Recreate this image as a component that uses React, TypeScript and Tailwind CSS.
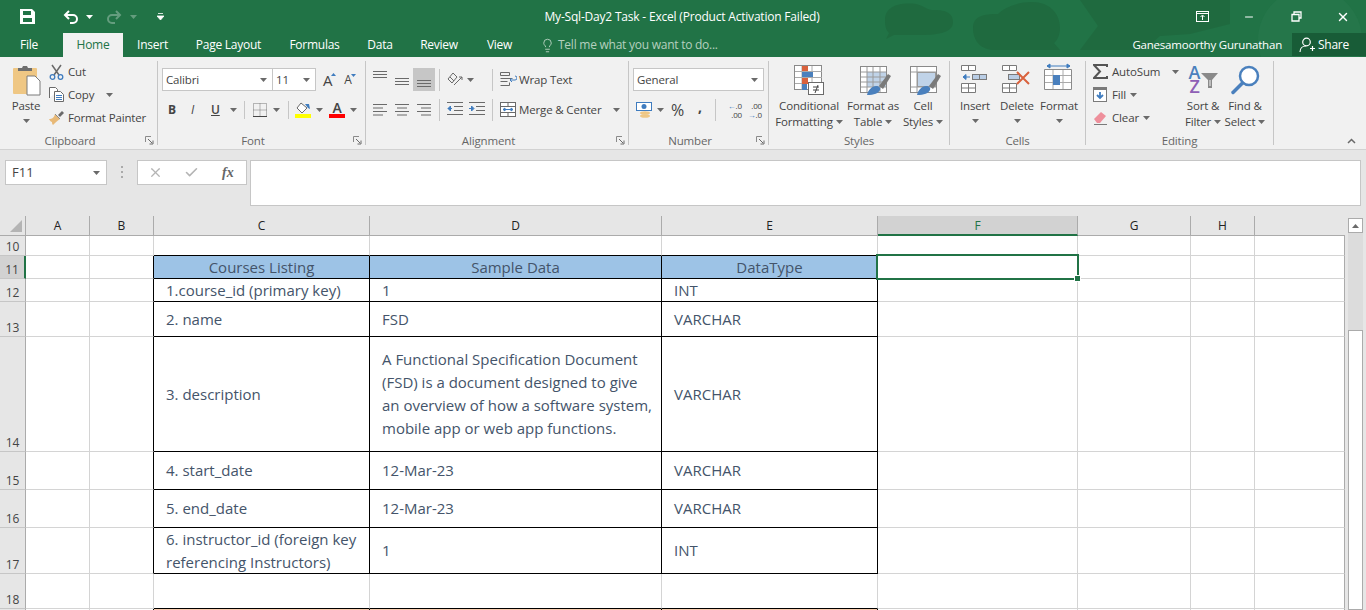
import type { ReactNode } from 'react'
import { Check, Lightbulb, Minus, X } from 'lucide-react'

const font = "[font-family:'Open_Sans','Liberation_Sans',sans-serif]"

function Caret({ className = '' }: { className?: string }) {
  return (
    <svg width="7" height="4" viewBox="0 0 7 4" className={`shrink-0 ${className}`}>
      <path d="M0 0h7L3.5 4z" fill="#6a6a6a" />
    </svg>
  )
}

function Launcher() {
  return (
    <svg width="9" height="9" viewBox="0 0 9 9">
      <path d="M.5 6V.5H6" fill="none" stroke="#8a8a8a" />
      <path d="M3 3l4 4M8 4.500V8H4.500" fill="none" stroke="#6a6a6a" />
    </svg>
  )
}

function Group({ label, width, children, launcher }: { label: string; width: number; children: ReactNode; launcher?: boolean }) {
  return (
    <div className="mt-[4px] flex h-[84px] flex-col border-r border-[#c6c6c6]" style={{ width }}>
      <div className="min-h-0 flex-1">{children}</div>
      <div className={`relative flex h-[8px] items-center justify-center whitespace-nowrap text-[11.5px] text-[#666] ${launcher ? 'pr-[17px]' : ''}`}>
        {label}
        {launcher && (
          <span className="absolute right-[3px] -top-[1px]">
            <Launcher />
          </span>
        )}
      </div>
    </div>
  )
}

function AlignLines({ lines }: { lines: [number, number][] }) {
  return (
    <svg width="16" height="12" viewBox="0 0 16 12" className="block">
      {lines.map(([x, w], i) => (
        <path key={i} d={`M${x} ${0.5 + i * 3.5}h${w}`} stroke="#6a6a6a" />
      ))}
    </svg>
  )
}

function VAlign() {
  return (
    <svg width="14" height="7" viewBox="0 0 14 7" className="block">
      <path d="M0 .5h14M0 3.500h14M0 6.500h14" stroke="#6a6a6a" />
    </svg>
  )
}

function TableSwatch({ kind }: { kind: 'format' | 'cell' }) {
  return (
    <svg width="36" height="32" viewBox="0 0 36 32">
      <rect x="3.500" y="2.500" width="26" height="26" fill="#fff" stroke="#8a8a8a" />
      {kind === 'format' ? (
        <>
          <rect x="10" y="8" width="19" height="15" fill="#c0d3e8" />
          <path d="M4 8h25M4 13h25M4 18h25M4 23h25M10 3v25M16 3v25M23 3v25" stroke="#9a9a9a" fill="none" />
        </>
      ) : (
        <>
          <path d="M4 8h25M4 23h25M10 3v25" stroke="#9a9a9a" fill="none" />
          <rect x="10.500" y="8.500" width="18" height="14" fill="#c0d3e8" stroke="#9a9a9a" />
        </>
      )}
      <path d="M22 22l9-12 3 2-8 13z" fill="#7a7a7a" />
      <path d="M10 31c1-5 5-9 9-9 3 0 5 2 4 4-1 3-6 5-13 5z" fill="#4a80bd" />
    </svg>
  )
}

const columns = ['A', 'B', 'C', 'D', 'E', 'F', 'G', 'H', '']

const rows: { n: number; cells?: string[] }[] = [
  { n: 10 },
  { n: 11, cells: ['Courses Listing', 'Sample Data', 'DataType'] },
  { n: 12, cells: ['1.course_id (primary key)', '1', 'INT'] },
  { n: 13, cells: ['2. name', 'FSD', 'VARCHAR'] },
  {
    n: 14,
    cells: [
      '3. description',
      'A Functional Specification Document (FSD) is a document designed to give an overview of how a software system, mobile app or web app functions.',
      'VARCHAR',
    ],
  },
  { n: 15, cells: ['4. start_date', '12-Mar-23', 'VARCHAR'] },
  { n: 16, cells: ['5. end_date', '12-Mar-23', 'VARCHAR'] },
  { n: 17, cells: ['6. instructor_id (foreign key referencing Instructors)', '1', 'INT'] },
  { n: 18 },
  { n: 19 },
]

function Sheet() {
  return (
    <div className="flex h-[394px] overflow-hidden bg-[#e6e6e6]">
      <div className="grid h-full w-[1345px] grid-cols-[26px_64px_64px_216px_292px_216px_200px_113px_64px_90px] grid-rows-[20px_20px_23px_23px_35px_115px_38px_38px_46px_35px_1px]">
        {/* corner + column letters */}
        <div className="flex items-end justify-end border-r border-b border-[#ababab] pr-[3px] pb-[3px]">
          <svg width="12" height="12" viewBox="0 0 12 12">
            <path d="M12 0v12H0z" fill="#b4b4b4" />
          </svg>
        </div>
        {columns.map((c, i) => (
          <div
            key={i}
            className={`flex items-center justify-center pt-[1px] text-[12px] leading-[16px] ${
              c === 'F'
                ? 'border-r border-b-2 border-r-[#ababab] border-b-[#217346] bg-[#d2d2d2] text-[#217346]'
                : c === ''
                  ? 'border-b border-[#ababab]'
                  : 'border-r border-b border-[#ababab] text-[#222]'
            }`}
          >
            {c}
          </div>
        ))}

        {rows.map((row) => {
          const inTable = row.n >= 11 && row.n <= 17
          return (
            <div key={row.n} className="contents">
              <div
                className={`flex items-end justify-center overflow-hidden text-[12px] leading-[16px] text-[#444] ${
                  row.n === 19 ? '' : 'border-b border-[#c6c6c6]'
                } ${row.n === 11 ? 'border-r-2 border-r-[#217346] bg-[#d2d2d2]' : 'border-r border-r-[#ababab]'}`}
              >
                {row.n === 19 ? '' : row.n}
              </div>
              {[0, 1, 2, 3, 4, 5, 6, 7, 8].map((col) => {
                const tableCol = col >= 2 && col <= 4
                const blackRight = col >= 1 && col <= 4 && (inTable || row.n === 19)
                const text = tableCol ? row.cells?.[col - 2] : undefined
                return (
                  <div
                    key={col}
                    className={`relative flex items-center border-r text-[15px] leading-[23px] text-[#44546a] ${
                      row.n === 19 ? '' : 'border-b'
                    } ${tableCol ? 'border-b-black' : 'border-b-[#d4d4d4]'} ${
                      col === 8 ? 'border-r-[#ababab]' : blackRight ? 'border-r-black' : 'border-r-[#d4d4d4]'
                    } ${
                      row.n === 11 && tableCol
                        ? 'justify-center bg-[#9dc3e6]'
                        : row.n === 19 && tableCol
                          ? 'bg-[#f8cbad]'
                          : 'bg-white pl-[12px] pr-[8px]'
                    }`}
                  >
                    {text}
                    {row.n === 11 && col === 5 && (
                      <div className="absolute -left-[2px] -top-[2px] z-10 h-[26px] w-[203px] border-2 border-[#217346]">
                        <div className="absolute -bottom-[4px] -right-[4px] h-[7px] w-[7px] border border-white bg-[#217346]" />
                      </div>
                    )}
                  </div>
                )
              })}
            </div>
          )
        })}
      </div>

      {/* vertical scrollbar */}
      <div className="h-full w-[21px] px-[3px] pt-[2px]">
        <div className="flex h-full flex-col bg-[#dcdcdc]">
          <div className="flex h-[15px] items-center justify-center border border-[#ababab] bg-white">
            <svg width="7" height="4" viewBox="0 0 7 4">
              <path d="M3.500 0L7 4H0z" fill="#6a6a6a" />
            </svg>
          </div>
          <div className="mt-[97px] flex-1 border border-[#ababab] bg-white" />
        </div>
      </div>
    </div>
  )
}

export default function App() {
  const tabs = [
    ['Insert', 'w-[59px]'],
    ['Page Layout', 'w-[93px]'],
    ['Formulas', 'w-[79px]'],
    ['Data', 'w-[52px]'],
    ['Review', 'w-[66px]'],
    ['View', 'w-[55px]'],
  ]

  return (
    <div className={`h-[610px] w-[1366px] overflow-hidden bg-[#e6e6e6] ${font}`}>
      {/* Title bar + tabs */}
      <div className="relative h-[57px] overflow-hidden bg-[#217346] text-white">
        {/* office theme blotches */}
        <svg className="absolute left-[880px] top-0" width="486" height="57" viewBox="0 0 486 57">
          <circle cx="430" cy="40" r="52" fill="#25764a" />
          <path d="M5 20C5 6 20 2 36 4c8 2 12 6 16 6 8 0 21 0 21 12 0 10-13 13-33 13H14l-8 4 3-6c-3-3-4-7-4-13z" fill="#1f6a3f" />
          <path d="M93 28c0-12 11-14 25-14 6-6 18-12 34-12 18 0 28 12 28 26 0 8-4 14-6 15l6 7h-65c-15 0-22-10-22-22z" fill="#1f6a3f" />
          <path d="M200 0h150v24l-40 10-30 2-16 14H200l18-24z" fill="#1f6a3f" />
        </svg>
        <div className="relative flex h-[33px] items-center">
          <div className="flex items-center">
            <svg className="ml-[20px]" width="15" height="15" viewBox="0 0 15 15">
              <path d="M0 0h12l3 3v12H0z" fill="#fff" />
              <path d="M3 2h8v4H3z" fill="#217346" />
              <path d="M3 9h9v4H3z" fill="#217346" />
            </svg>
            <svg className="ml-[28px]" width="15" height="14" viewBox="0 0 15 14">
              <path d="M6 1L2 5l4 4M2 5h8a3.500 3.500 0 0 1 0 8H7" fill="none" stroke="#fff" strokeWidth="2" />
            </svg>
            <Caret className="ml-[8px] [&_path]:fill-white" />
            <svg className="ml-[14px] opacity-30" width="15" height="14" viewBox="0 0 15 14">
              <path d="M9 1l4 4-4 4M13 5H5a3.500 3.500 0 0 0 0 8h3" fill="none" stroke="#fff" strokeWidth="2" />
            </svg>
            <Caret className="ml-[8px] opacity-30 [&_path]:fill-white" />
            <svg className="ml-[20px]" width="7" height="7" viewBox="0 0 7 7">
              <path d="M1 .5h5M0 3h7L3.500 7z" stroke="#fff" strokeWidth=".8" fill="#fff" />
            </svg>
          </div>
          <div className="absolute left-0 right-0 top-[8px] flex justify-center pr-[2px] text-[12px] leading-[17px] tracking-[-0.2px]">
            My-Sql-Day2 Task - Excel (Product Activation Failed)
          </div>
          <div className="ml-auto flex items-center">
            <svg width="13" height="11" viewBox="0 0 13 11">
              <rect x=".5" y=".5" width="12" height="10" fill="none" stroke="#fff" />
              <path d="M.5 2.500h12M6.500 9V4.500M4.500 6l2-2 2 2" fill="none" stroke="#fff" />
            </svg>
            <Minus className="ml-[34px]" size={12} strokeWidth={2} />
            <svg className="ml-[36px]" width="11" height="11" viewBox="0 0 11 11">
              <path d="M3 3V1h7v6H8M1 3.500h7V10H1z" fill="none" stroke="#fff" strokeWidth="1.300" />
            </svg>
            <X className="ml-[34px] mr-[16px]" size={14} strokeWidth={2.500} />
          </div>
        </div>
        <div className="relative flex h-[24px] items-center text-[12px] tracking-[-0.25px]">
          <div className="flex h-full w-[58px] items-center justify-center">File</div>
          <div className="ml-[5px] flex h-full w-[60px] items-center justify-center bg-[#f1f1f1] text-[#217346]">Home</div>
          {tabs.map(([t, w]) => (
            <div key={t} className={`flex h-full items-center justify-center ${w}`}>
              {t}
            </div>
          ))}
          <Lightbulb className="ml-[13px] text-[#b5d0bf]" size={15} strokeWidth={1.500} />
          <div className="ml-[3px] text-[#b5d0bf]">Tell me what you want to do...</div>
          <div className="ml-auto text-[11.5px] tracking-[-0.2px]">Ganesamoorthy Gurunathan</div>
          <div className="ml-[10px] flex h-[23px] w-[74px] items-center gap-[3px] self-start bg-[#185c37] pl-[7px]">
            <svg width="16" height="16" viewBox="0 0 16 16">
              <circle cx="7.500" cy="5" r="3.800" fill="none" stroke="#fff" strokeWidth="1.200" />
              <path d="M1 15c0-3.500 2.500-6 6-6M11 11.500h5M13.500 9v5" fill="none" stroke="#fff" strokeWidth="1.200" />
            </svg>
            Share
          </div>
        </div>
      </div>

      {/* Ribbon */}
      <div className="relative flex h-[93px] items-start border-b border-[#d2d2d2] bg-[#f1f1f1] text-[11.5px] leading-[16px] tracking-[-0.15px] text-[#444]">
        <Group label="Clipboard" width={158} launcher>
          <div className="flex">
            <div className="ml-[11px] flex w-[30px] flex-col items-center">
              <svg className="mt-[4px]" width="30" height="31" viewBox="0 0 30 31">
                <rect x="2" y="3" width="24" height="26" rx="1" fill="#efc784" />
                <path d="M7 6V3h4l1-2h4l1 2h4v3z" fill="#6e6e6e" />
                <path d="M16 11h8l5 5v14H16z" fill="#fff" stroke="#7a7a7a" />
              </svg>
              <div className="mt-[2px]">Paste</div>
              <Caret className="mt-[5px]" />
            </div>
            <div className="ml-[8px] -mt-[1px] flex flex-col">
              <div className="flex h-[23px] items-center gap-[4px]">
                <svg width="15" height="16" viewBox="0 0 15 16">
                  <path d="M3 1l7 10M12 1L5 11" stroke="#6a6a6a" strokeWidth="1.500" />
                  <circle cx="3.500" cy="13" r="2.300" fill="none" stroke="#3f7cbf" strokeWidth="1.300" />
                  <circle cx="11.500" cy="13" r="2.300" fill="none" stroke="#3f7cbf" strokeWidth="1.300" />
                </svg>
                Cut
              </div>
              <div className="flex h-[23px] items-center gap-[4px]">
                <svg width="15" height="15" viewBox="0 0 15 15">
                  <path d="M.5 11V.5h6l2 2V4" fill="#fff" stroke="#6a6a6a" />
                  <path d="M5.500 4.500h6l3 3v7h-9z" fill="#fff" stroke="#6a6a6a" />
                  <path d="M7 8.500h6M7 10.500h6M7 12.500h6" stroke="#3f7cbf" />
                </svg>
                Copy
                <Caret className="ml-[8px]" />
              </div>
              <div className="flex h-[23px] items-center gap-[3px]">
                <svg width="16" height="15" viewBox="0 0 16 15">
                  <path d="M9 5l4-4 2 2-4 4z" fill="#6a6a6a" />
                  <path d="M0 9c3 0 5-1 6-5l5 5c-3 2-5 4-7 6-1-1-1-2-1-3-1 0-2-1-3-3z" fill="#e8b977" />
                  <path d="M6 4l5 5" stroke="#8a8a8a" />
                </svg>
                Format Painter
              </div>
            </div>
          </div>
        </Group>

        <Group label="Font" width={208} launcher>
          <div className="mt-[7px] flex h-[23px] items-center pl-[4px]">
            <div className="flex h-[23px] w-[111px] items-center justify-between border border-[#c6c6c6] bg-white pl-[3px] pr-[5px]">
              Calibri
              <Caret />
            </div>
            <div className="flex h-[23px] w-[43px] items-center justify-between border border-l-0 border-[#c6c6c6] bg-white pl-[3px] pr-[5px]">
              11
              <Caret />
            </div>
            <div className="relative ml-[7px] text-[15px]">
              A
              <svg className="absolute -right-[4px] top-[1px]" width="5" height="3" viewBox="0 0 5 3">
                <path d="M2.500 0L5 3H0z" fill="#3f7cbf" />
              </svg>
            </div>
            <div className="relative ml-[12px] text-[12px]">
              A
              <svg className="absolute -right-[4px] top-[2px]" width="5" height="3" viewBox="0 0 5 3">
                <path d="M0 0h5L2.500 3z" fill="#3f7cbf" />
              </svg>
            </div>
          </div>
          <div className="mt-[7px] flex h-[23px] items-center pl-[10px] text-[12px]">
            <span className="w-[23px] font-bold">B</span>
            <span className="w-[20px] italic">I</span>
            <span className="w-[15px] font-semibold underline">U</span>
            <Caret className="ml-[4px]" />
            <span className="ml-[7px] h-[18px] w-px bg-[#c6c6c6]" />
            <svg className="ml-[8px]" width="14" height="14" viewBox="0 0 14 14">
              <path d="M.5.500h13v13H.5zM7 .5v13M.5 7h13" fill="none" stroke="#777" strokeDasharray="1 1" />
              <path d="M0 13.500h14" stroke="#444" />
            </svg>
            <Caret className="ml-[6px]" />
            <span className="ml-[8px] h-[18px] w-px bg-[#c6c6c6]" />
            <div className="ml-[6px] flex w-[16px] flex-col items-center">
              <svg width="16" height="12" viewBox="0 0 16 12">
                <path d="M6 1l6 5-5 5-5-5z" fill="#fff" stroke="#6a6a6a" />
                <path d="M10 2h4l1 5-2-1z" fill="#3f7cbf" />
              </svg>
              <span className="h-[4px] w-[16px] bg-[#ffff00]" />
            </div>
            <Caret className="ml-[5px]" />
            <div className="ml-[6px] flex w-[16px] flex-col items-center leading-[12px]">
              <span className="h-[12px] text-[14px] font-semibold leading-[12px]">A</span>
              <span className="h-[4px] w-[16px] bg-[#ff0000]" />
            </div>
            <Caret className="ml-[5px]" />
          </div>
        </Group>

        <Group label="Alignment" width={263} launcher>
          <div className="mt-[7px] flex h-[23px] items-center whitespace-nowrap pl-[7px]">
            <div className="flex h-[23px] w-[22px] items-start pt-[3px]"><VAlign /></div>
            <div className="flex h-[23px] w-[18px] items-center pt-[3px]"><VAlign /></div>
            <div className="flex h-[23px] w-[22px] items-end justify-center bg-[#c6c6c6] pb-[4px]"><VAlign /></div>
            <span className="ml-[4px] h-[22px] w-px bg-[#c6c6c6]" />
            <svg className="ml-[7px]" width="16" height="15" viewBox="0 0 16 15">
              <path d="M1 7l5-6 4 4-5 6zM3 5l4 4M7 13l8-8M12 5h3v3" fill="none" stroke="#6a6a6a" />
            </svg>
            <Caret className="ml-[4px]" />
            <span className="ml-[18px] h-[22px] w-px bg-[#c6c6c6]" />
            <svg className="ml-[7px]" width="17" height="15" viewBox="0 0 17 15">
              <path d="M.5.500h9v3h-9zM.5 6.500h12M.5 9.500h7M.5 13.500h9v-3" fill="none" stroke="#6a6a6a" />
              <path d="M10 8h5a1.500 1.500 0 0 0 0-4M10 8l2-2M10 8l2 2" fill="none" stroke="#3f7cbf" />
            </svg>
            <span className="ml-[2px]">Wrap Text</span>
          </div>
          <div className="mt-[7px] flex h-[23px] items-center whitespace-nowrap pl-[7px]">
            <div className="w-[22px]"><AlignLines lines={[[0, 14], [0, 10], [0, 14], [0, 10]]} /></div>
            <div className="w-[22px]"><AlignLines lines={[[0, 14], [2, 10], [0, 14], [2, 10]]} /></div>
            <div className="w-[22px]"><AlignLines lines={[[0, 14], [4, 10], [0, 14], [4, 10]]} /></div>
            <span className="h-[22px] w-px bg-[#c6c6c6]" />
            <svg className="ml-[7px]" width="16" height="15" viewBox="0 0 16 15">
              <path d="M0 .5h16M7 4.500h9M7 8.500h9M0 12.500h16" stroke="#6a6a6a" />
              <path d="M5 6.500H1M1 6.500l2.500-2.500v5z" stroke="#3f7cbf" fill="#3f7cbf" />
            </svg>
            <svg className="ml-[6px]" width="16" height="15" viewBox="0 0 16 15">
              <path d="M0 .5h16M7 4.500h9M7 8.500h9M0 12.500h16" stroke="#6a6a6a" />
              <path d="M0 6.500h4M5 6.500L2.500 4v5z" stroke="#3f7cbf" fill="#3f7cbf" />
            </svg>
            <span className="ml-[7px] h-[22px] w-px bg-[#c6c6c6]" />
            <svg className="ml-[7px]" width="16" height="15" viewBox="0 0 16 15">
              <rect x=".5" y=".5" width="15" height="14" fill="#fff" stroke="#6a6a6a" />
              <path d="M.5 4.500h15M.5 10.500h15M8 .5v4M8 10.500v4" stroke="#6a6a6a" />
              <path d="M3 7.500h10M3 7.500l2-1.500v3zM13 7.500l-2-1.500v3z" stroke="#3f7cbf" fill="#3f7cbf" />
            </svg>
            <span className="ml-[3px]">Merge &amp; Center</span>
            <Caret className="ml-[12px]" />
          </div>
        </Group>

        <Group label="Number" width={140} launcher>
          <div className="ml-[4px] mt-[7px] flex h-[23px] w-[131px] items-center justify-between border border-[#c6c6c6] bg-white pl-[3px] pr-[5px]">
            General
            <Caret />
          </div>
          <div className="mt-[7px] flex h-[23px] items-center pl-[7px]">
            <svg width="16" height="16" viewBox="0 0 16 16">
              <rect x=".5" y=".5" width="15" height="8" fill="#fff" stroke="#3f7cbf" />
              <circle cx="8" cy="4.500" r="2.500" fill="#3f7cbf" />
              <ellipse cx="9" cy="11" rx="5" ry="1.800" fill="#efc784" />
              <ellipse cx="9" cy="14" rx="5" ry="1.800" fill="#efc784" />
            </svg>
            <Caret className="ml-[5px]" />
            <span className="ml-[7px] w-[14px] text-[16px]">%</span>
            <span className="ml-[13px] mb-[6px] w-[5px] text-[14px] font-bold">,</span>
            <span className="ml-[12px] h-[22px] w-px bg-[#c6c6c6]" />
            <div className="ml-[6px] flex w-[20px] flex-col items-end text-[8px] leading-[9px]">
              <span><span className="text-[#3f7cbf]">←</span>.0</span>
              <span>.00</span>
            </div>
            <div className="ml-[3px] flex w-[17px] flex-col items-end text-[8px] leading-[9px]">
              <span>.00</span>
              <span><span className="text-[#3f7cbf]">→</span>.0</span>
            </div>
          </div>
        </Group>

        <Group label="Styles" width={181}>
          <div className="flex whitespace-nowrap text-center">
            <div className="flex w-[80px] flex-col items-center">
              <div className="h-[37px] pt-[4px]">
                <svg width="31" height="31" viewBox="0 0 31 31">
                  <rect x=".5" y=".5" width="27" height="24" fill="#fff" stroke="#8a8a8a" />
                  <path d="M8 1v24M18 1v24M1 6.500h27M1 12.500h27M1 18.500h27" stroke="#aaa" />
                  <path d="M8 1h6v5H8zM8 13h6v6H8z" fill="#d9623d" />
                  <path d="M8 7h11v5H8zM8 19h5v6H8z" fill="#4a80bd" />
                  <rect x="14.500" y="17.500" width="15" height="12" fill="#fff" stroke="#6a6a6a" />
                  <path d="M19 22h6M19 25h6M24 20l-3 8" stroke="#444" />
                </svg>
              </div>
              <div>
                Conditional
                <div className="flex items-center justify-center gap-[3px]">Formatting <Caret /></div>
              </div>
            </div>
            <div className="flex w-[48px] flex-col items-center">
              <div className="ml-[4px] h-[37px] pt-[3px]"><TableSwatch kind="format" /></div>
              <div>
                Format as
                <div className="flex items-center justify-center gap-[3px]">Table <Caret /></div>
              </div>
            </div>
            <div className="flex w-[52px] flex-col items-center">
              <div className="ml-[4px] h-[37px] pt-[3px]"><TableSwatch kind="cell" /></div>
              <div>
                Cell
                <div className="flex items-center justify-center gap-[3px]">Styles <Caret /></div>
              </div>
            </div>
          </div>
        </Group>

        <Group label="Cells" width={136}>
          <div className="flex pl-[4px] text-center">
            <div className="flex w-[42px] flex-col items-center">
              <div className="h-[37px] pt-[4px]">
                <svg width="28" height="28" viewBox="0 0 28 28">
                  <path d="M.5.500h14v5H.5zM7.500.5v5M.5 18.500h14v9H.5zM.5 23h14M7.500 18.500v9" fill="#fff" stroke="#7a7a7a" />
                  <rect x="11.500" y="9.500" width="14" height="5" fill="#b9cde5" stroke="#7a7a7a" />
                  <path d="M18.500 9.500v5" stroke="#7a7a7a" />
                  <path d="M9 12H2M2 12l3-2.500v5z" stroke="#3f7cbf" fill="#3f7cbf" />
                </svg>
              </div>
              <div>Insert</div>
              <Caret className="mt-[5px]" />
            </div>
            <div className="flex w-[42px] flex-col items-center">
              <div className="h-[37px] pt-[4px]">
                <svg width="30" height="28" viewBox="0 0 30 28">
                  <path d="M.5.500h14v5H.5zM7.500.5v5M.5 18.500h14v9H.5zM.5 23h14M7.500 18.500v9" fill="#fff" stroke="#7a7a7a" />
                  <rect x="6.500" y="9.500" width="11" height="5" fill="#b9cde5" stroke="#7a7a7a" />
                  <path d="M15 7l12 12M27 7L15 19" stroke="#d9623d" strokeWidth="2" />
                </svg>
              </div>
              <div>Delete</div>
              <Caret className="mt-[5px]" />
            </div>
            <div className="flex w-[42px] flex-col items-center">
              <div className="h-[37px] pt-[2px]">
                <svg width="30" height="30" viewBox="0 0 30 30">
                  <path d="M3 3h23M3 3l3-2v4zM26 3l-3-2v4z" stroke="#3f7cbf" fill="#3f7cbf" />
                  <path d="M.5 6.500h27v20H.5z" fill="#fff" stroke="#8a8a8a" />
                  <path d="M9 7v19M19 7v19M1 12.500h26M1 19.500h26" stroke="#aaa" />
                  <rect x="9" y="12" width="7" height="10" fill="#4a80bd" />
                </svg>
              </div>
              <div>Format</div>
              <Caret className="mt-[5px]" />
            </div>
          </div>
        </Group>

        <Group label="Editing" width={188}>
          <div className="flex pl-[7px]">
            <div className="-mt-[1px] flex w-[89px] flex-col">
              <div className="flex h-[23px] items-center gap-[4px]">
                <svg width="15" height="15" viewBox="0 0 15 15">
                  <path d="M14 3V1H1l6 6.500L1 14h13v-2" fill="none" stroke="#555" strokeWidth="2" />
                </svg>
                AutoSum
                <Caret className="ml-[8px]" />
              </div>
              <div className="flex h-[23px] items-center gap-[4px]">
                <svg width="15" height="15" viewBox="0 0 15 15">
                  <rect x=".5" y=".5" width="13" height="14" fill="#fff" stroke="#7a7a7a" />
                  <path d="M0 0h14v3H0z" fill="#7a7a7a" />
                  <path d="M7 5v6M4 8l3 3 3-3" fill="none" stroke="#3f7cbf" strokeWidth="1.800" />
                </svg>
                Fill <Caret />
              </div>
              <div className="flex h-[23px] items-center gap-[4px]">
                <svg width="15" height="15" viewBox="0 0 15 15">
                  <path d="M1 9l7-7 5 4-6 7H4z" fill="#ee8f9b" />
                  <path d="M1 14.500h13" stroke="#7a7a7a" />
                </svg>
                Clear <Caret />
              </div>
            </div>
            <div className="flex w-[42px] flex-col items-center text-center">
              <div className="flex h-[37px] w-[32px] pl-[1px] pt-[4px]">
                <div className="flex w-[13px] flex-col text-[18px] font-semibold leading-[14px]">
                  <span className="text-[#4a80bd]">A</span>
                  <span className="text-[#8e5fb5]">Z</span>
                </div>
                <svg className="mt-[8px]" width="17" height="15" viewBox="0 0 17 15">
                  <path d="M0 0h17l-6 7v8H7V7z" fill="#8a8a8a" />
                  <path d="M8.500 7h1v6h-1z" fill="#f1f1f1" />
                </svg>
              </div>
              <div>
                Sort &amp;
                <div className="flex items-center justify-center gap-[3px]">Filter <Caret /></div>
              </div>
            </div>
            <div className="flex w-[42px] flex-col items-center text-center">
              <div className="h-[37px] pt-[4px]">
                <svg width="30" height="30" viewBox="0 0 30 30">
                  <circle cx="19" cy="11" r="9" fill="#fff" stroke="#4a80bd" strokeWidth="2.500" />
                  <path d="M12.500 18L3 27.500" stroke="#4a80bd" strokeWidth="3.500" strokeLinecap="round" />
                </svg>
              </div>
              <div>
                Find &amp;
                <div className="flex items-center justify-center gap-[3px]">Select <Caret /></div>
              </div>
            </div>
          </div>
        </Group>

        <svg className="absolute right-[10px] top-[81px]" width="9" height="6" viewBox="0 0 9 6">
          <path d="M1 5l3.500-3.500L8 5" fill="none" stroke="#6a6a6a" strokeWidth="1.500" />
        </svg>
      </div>

      {/* Formula bar */}
      <div className="flex h-[66px] items-start bg-[#e6e6e6] pt-[10px] text-[13px] text-[#444]">
        <div className="ml-[5px] flex h-[25px] w-[102px] items-center justify-between border border-[#c6c6c6] bg-white pl-[6px] pr-[6px]">
          F11
          <Caret />
        </div>
        <div className="ml-[14px] mt-[6px] flex h-[12px] w-[3px] flex-col justify-between">
          <span className="h-[2px] w-[2px] bg-[#aaa]" />
          <span className="h-[2px] w-[2px] bg-[#aaa]" />
          <span className="h-[2px] w-[2px] bg-[#aaa]" />
        </div>
        <div className="ml-[13px] flex h-[25px] w-[110px] items-center border border-[#c6c6c6] bg-white pl-[10px]">
          <X className="text-[#b4b4b4]" size={15} strokeWidth={2} />
          <Check className="ml-[21px] text-[#b4b4b4]" size={15} strokeWidth={2.500} />
          <span className="ml-[23px] [font-family:'Liberation_Serif',serif] text-[14px] font-bold italic text-[#666]">fx</span>
        </div>
        <div className="ml-[3px] h-[46px] w-[1111px] border border-[#c6c6c6] bg-white" />
      </div>

      <Sheet />
    </div>
  )
}
